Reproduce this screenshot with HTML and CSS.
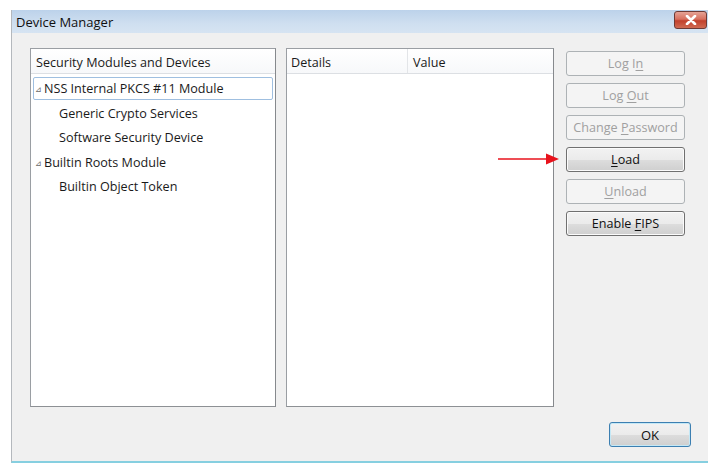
FILE: index.html
```html
<!DOCTYPE html>
<html lang="en">
<head>
    <meta charset="UTF-8">
    <title>Device Manager</title>
    <link rel="stylesheet" href="styles.css">
</head>
<body>

    <div class="window">
        <div class="titlebar">
            <span class="title">Device Manager</span>
            <span class="close-btn">
                <svg width="14" height="10" viewBox="0 0 14 10">
                    <path d="M3 1 L11 9 M11 1 L3 9" stroke="#fff" stroke-width="2.6" stroke-linecap="round"/>
                </svg>
            </span>
        </div>

        <div class="content">
            <div class="panel tree">
                <div class="head">Security Modules and Devices</div>
                <div class="row parent selected"><span class="twisty">&#8895;</span>NSS Internal PKCS #11 Module</div>
                <div class="row child">Generic Crypto Services</div>
                <div class="row child">Software Security Device</div>
                <div class="row parent"><span class="twisty">&#8895;</span>Builtin Roots Module</div>
                <div class="row child">Builtin Object Token</div>
            </div>

            <div class="panel details">
                <div class="head cols">
                    <span class="col-details">Details</span>
                    <span class="col-value">Value</span>
                </div>
            </div>

            <div class="actions">
                <button class="btn" disabled>Log I<u>n</u></button>
                <button class="btn" disabled>Log <u>O</u>ut</button>
                <button class="btn" disabled>Change <u>P</u>assword</button>
                <button class="btn">
                    <u>L</u>oad
                    <svg class="arrow" width="62" height="14" viewBox="0 0 62 14">
                        <line x1="0" y1="7" x2="50" y2="7" stroke="#e8121c" stroke-width="1.5"/>
                        <polygon points="48,1.5 61,7 48,12.5" fill="#e8121c"/>
                    </svg>
                </button>
                <button class="btn" disabled><u>U</u>nload</button>
                <button class="btn">Enable <u>F</u>IPS</button>
            </div>
        </div>

        <div class="footer">
            <button class="btn ok">OK</button>
        </div>
    </div>

</body>
</html>
```

FILE: styles.css
```css
* {
    margin: 0;
    padding: 0;
    box-sizing: border-box;
}

body {
    background: #fff;
    font-family: "Open Sans", "Noto Sans", sans-serif;
    font-size: 12.6px;
    color: #1a1a1a;
}

.window {
    margin: 10px 0 0 11px;
    width: 697px;
    height: 453px;
    background: #f0f0f0;
    border-left: 1px solid #b4b8bd;
    border-bottom: 2px solid #86cfe0;
    display: flex;
    flex-direction: column;
}

.titlebar {
    height: 23px;
    background: linear-gradient(#bcd2ea, #cfdff0 60%, #d6e4f2);
    display: flex;
    align-items: center;
    justify-content: space-between;
    padding: 0 1px 0 4px;
}

.title {
    font-size: 13px;
    color: #101010;
}

.close-btn {
    width: 33px;
    height: 18px;
    margin-top: -3px;
    border: 1px solid #6d3a35;
    border-radius: 3px;
    background: linear-gradient(#e5a396, #d7705f 45%, #c2412c 55%, #cf6a52);
    display: flex;
    align-items: center;
    justify-content: center;
}

.content {
    display: flex;
    padding: 15px 0 0 18px;
}

.panel {
    height: 359px;
    background: #fff;
    border: 1px solid #9a9ea3;
    border-right-color: #86898d;
    border-bottom-color: #8d9094;
}

.tree {
    width: 246px;
}

.details {
    width: 268px;
    margin-left: 10px;
}

.head {
    height: 25px;
    line-height: 20px;
    padding: 4px 0 0 5px;
    border-bottom: 1px solid #dcdfe3;
    background: linear-gradient(#fff, #f7f8fa);
}

.cols {
    display: flex;
    padding-left: 0;
}

.col-details {
    width: 121px;
    padding-left: 4px;
    border-right: 1px solid #e3e5e8;
    margin-top: -4px;
    padding-top: 4px;
}

.col-value {
    padding-left: 5px;
}

.row {
    height: 24.5px;
    line-height: 23px;
    margin: 0 2px;
    white-space: nowrap;
}

.tree .head + .row {
    margin-top: 3px;
}

.row.parent {
    padding-left: 2px;
}

.row.child {
    padding-left: 26px;
}

.row.selected {
    height: 23px;
    margin-bottom: 1.5px;
    border: 1px solid #9fbfe0;
    border-radius: 2px;
    padding-left: 1px;
    line-height: 22px;
}

.twisty {
    display: inline-block;
    width: 9px;
    font-size: 8px;
    color: #6a6a6a;
    vertical-align: 1px;
}

.actions {
    width: 119px;
    margin-left: 12px;
    padding-top: 3px;
    display: flex;
    flex-direction: column;
    gap: 7px;
}

.btn {
    position: relative;
    height: 25px;
    font-family: inherit;
    font-size: 12.6px;
    color: #111;
    border: 1px solid #707070;
    border-radius: 3px;
    background: linear-gradient(#f2f2f2, #ebebeb 50%, #dddddd 51%, #cfcfcf);
    box-shadow: inset 0 0 0 1px #fbfbfb;
}

.btn:disabled {
    color: #a0a0a0;
    border-color: #adb2b5;
    background: #f4f4f4;
    box-shadow: none;
}

.btn u {
    text-underline-offset: 2px;
}

.arrow {
    position: absolute;
    left: -69px;
    top: 4px;
}

.footer {
    display: flex;
    justify-content: flex-end;
    padding: 15px 17px 0 0;
}

.ok {
    width: 82px;
    font-size: 13px;
    border-color: #3c7fb1;
    box-shadow: inset 0 0 0 1px #c4e8f6;
}
```
